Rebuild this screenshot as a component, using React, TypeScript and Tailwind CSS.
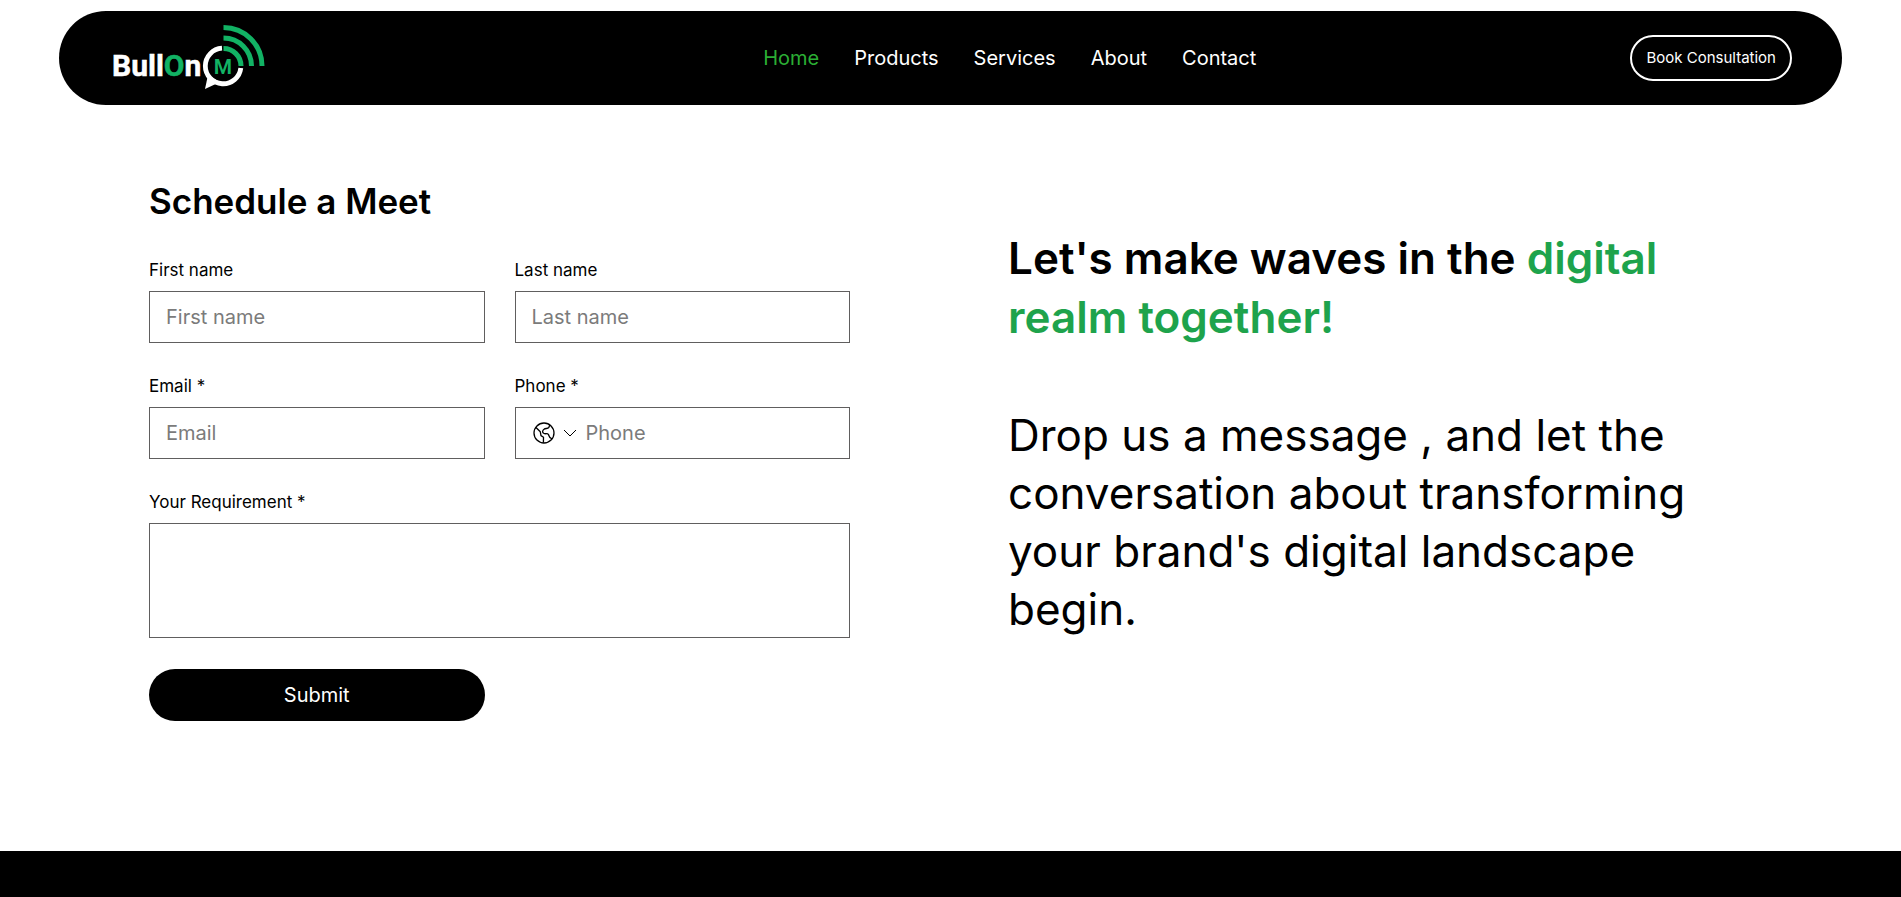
import React from 'react'

const NAV_LINKS = ['Home', 'Products', 'Services', 'About', 'Contact']

const FIELD_CLASS =
  'w-full border border-[#605e5e] bg-white text-xl text-black placeholder:text-[#7b7b7b] outline-none focus:border-black'

const LABEL_CLASS = 'text-[17px] leading-6'

function Logo() {
  return (
    <svg width="154" height="70" viewBox="0 0 154 70" role="img" aria-label="BullOnM">
      <text x="-1" y="53" fontFamily="Roboto, sans-serif" fontSize="30" fontWeight="700" fill="#fff" stroke="#fff" strokeWidth="0.5">
        Bull
        <tspan fill="#12b264" stroke="#12b264">O</tspan>
        n
      </text>
      {/* Speech bubble ring, open at the top right */}
      <path d="M109 25.2A17.8 17.8 0 1 0 127.8 45" fill="none" stroke="#fff" strokeWidth="4.8" />
      <path d="M95 52L92 66L107 59Z" fill="#fff" />
      <text
        x="110"
        y="51"
        textAnchor="middle"
        fontFamily="Roboto, sans-serif"
        fontSize="21"
        fontWeight="600"
        fill="#12b264"
      >
        M
      </text>
      {/* Signal waves */}
      <g fill="none" stroke="#12b264" strokeWidth="5">
        <path d="M110.5 25.5A17.5 17.5 0 0 1 128 43" />
        <path d="M110.5 15A28 28 0 0 1 138.5 43" />
        <path d="M110.5 4.5A38.5 38.5 0 0 1 149 43" />
      </g>
    </svg>
  )
}

function GlobeIcon() {
  return (
    <svg
      className="size-6"
      viewBox="0 0 24 24"
      fill="none"
      stroke="currentColor"
      strokeWidth="1.3"
      strokeLinejoin="round"
      aria-hidden="true"
    >
      <circle cx="12" cy="12" r="10" />
      <path d="M4 6.5L8.3 10.8L9 14.6L11.5 16.2L11.4 21.8" />
      <path d="M17.8 4L16.8 6.5C15.5 8 13.5 7 12 8.3C10.5 9.5 9.8 11.5 12 12.5C13.5 13.2 15.5 12 16.5 13.5C17 15 17 17 20 17.8" />
    </svg>
  )
}

interface FieldProps {
  id: string
  label: string
  placeholder: string
  type?: string
}

function Field({ id, label, placeholder, type = 'text' }: FieldProps) {
  return (
    <div className="flex flex-col gap-[9px]">
      <label htmlFor={id} className={LABEL_CLASS}>
        {label}
      </label>
      <input id={id} type={type} placeholder={placeholder} className={`${FIELD_CLASS} h-13 px-4`} />
    </div>
  )
}

export default function App() {
  return (
    <div className="min-h-screen bg-white font-['Inter',sans-serif] text-black">
      <header className="px-[59px] pt-[11px]">
        <div className="flex h-[94px] items-center justify-between rounded-full bg-black pr-[50px] pl-[54px]">
          <a href="#home" className="w-[276px]">
            <Logo />
          </a>
          <nav className="flex gap-[35px] text-xl">
            {NAV_LINKS.map((link) => (
              <a
                key={link}
                href={`#${link.toLowerCase()}`}
                className={link === 'Home' ? 'text-[#2bae34]' : 'text-white'}
              >
                {link}
              </a>
            ))}
          </nav>
          <button
            type="button"
            className="h-[46px] rounded-full border-2 border-white px-3.5 text-[15px] text-white"
          >
            Book Consultation
          </button>
        </div>
      </header>

      <main className="grid grid-cols-2 gap-x-[158px] pt-[71px] pr-48 pb-[130px] pl-[149px]">
        <form className="grid grid-cols-2 gap-x-[30px] gap-y-[31px]" onSubmit={(e) => e.preventDefault()}>
          <h1 className="col-span-2 text-[35px] leading-[51px] font-semibold">Schedule a Meet</h1>
          <Field id="first-name" label="First name" placeholder="First name" />
          <Field id="last-name" label="Last name" placeholder="Last name" />
          <Field id="email" label="Email *" placeholder="Email" type="email" />
          <div className="flex flex-col gap-[9px]">
            <label htmlFor="phone" className={LABEL_CLASS}>
              Phone *
            </label>
            <div className="flex h-13 items-center border border-[#605e5e] pl-4">
              <button type="button" aria-label="Country code" className="flex items-center gap-1.5">
                <GlobeIcon />
                <svg className="h-3 w-4" viewBox="0 0 16 12" fill="none" stroke="currentColor" aria-hidden="true">
                  <path d="M2 3L8 9L14 3" />
                </svg>
              </button>
              <input
                id="phone"
                type="tel"
                placeholder="Phone"
                className="min-w-0 flex-1 px-2 text-xl outline-none placeholder:text-[#7b7b7b]"
              />
            </div>
          </div>
          <div className="col-span-2 flex flex-col gap-[9px]">
            <label htmlFor="requirement" className={LABEL_CLASS}>
              Your Requirement *
            </label>
            <textarea id="requirement" className={`${FIELD_CLASS} h-[115px] resize-none p-4`} />
          </div>
          <button type="submit" className="h-13 rounded-full bg-black text-xl text-white">
            Submit
          </button>
        </form>

        <section className="pt-[53px] text-[44px]">
          <h2 className="leading-[59px] font-semibold">
            Let's make waves in the <span className="text-[#1ea34c]">digital</span>{' '}
            <span className="text-[#1ea34c]">realm together!</span>
          </h2>
          <p className="mt-[59px] leading-[58px]">
            Drop us a message , and let the conversation about transforming your brand's digital landscape begin.
          </p>
        </section>
      </main>

      <footer className="h-[46px] bg-black" />
    </div>
  )
}
